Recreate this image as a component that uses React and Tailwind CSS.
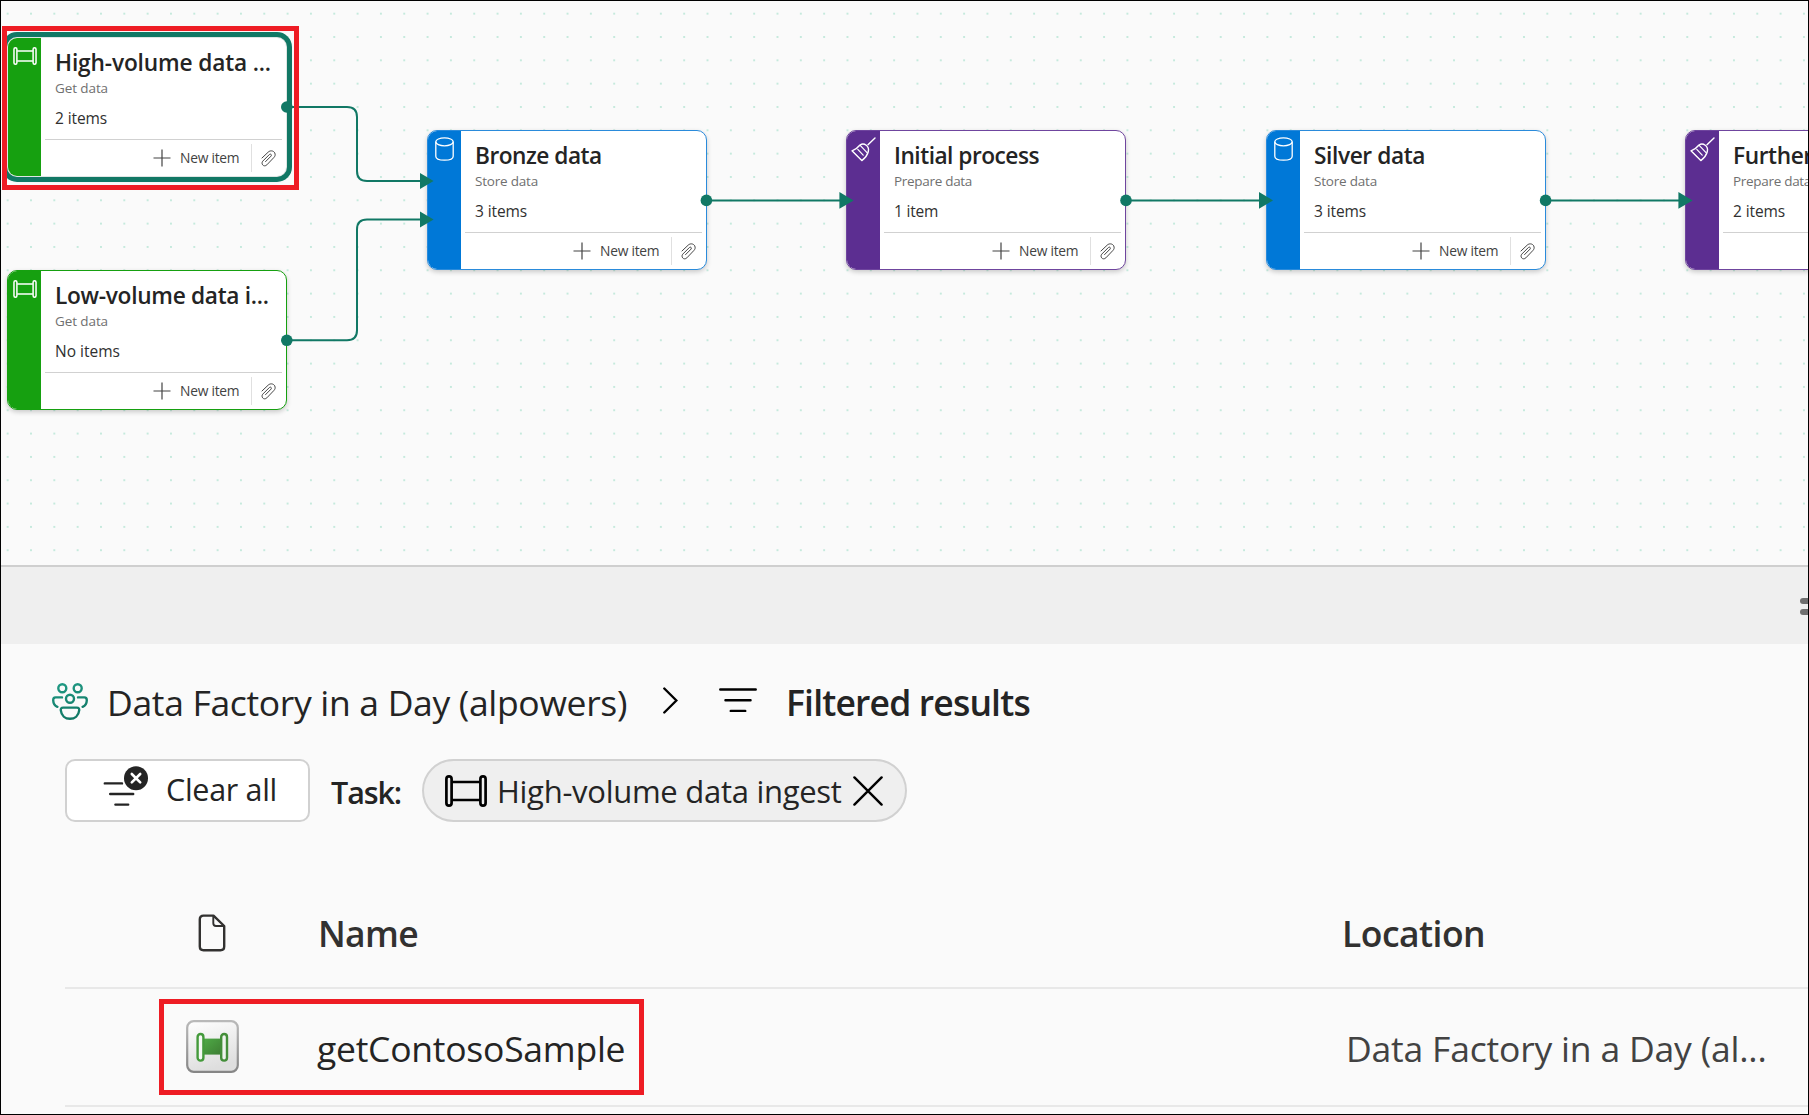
import React from "react";

function PipeIcon({ className }) {
  return (
    <svg viewBox="0 0 42 32" fill="none" stroke="currentColor" strokeWidth="2.7" className={className}>
      <rect x="1.4" y="1.4" width="5.2" height="29.2" rx="2.6" />
      <rect x="35.4" y="1.4" width="5.2" height="29.2" rx="2.6" />
      <path d="M7 7H35M7 25H35" />
    </svg>
  );
}

function CylinderIcon({ className }) {
  return (
    <svg viewBox="0 0 19 24" fill="none" stroke="currentColor" strokeWidth="1.3" className={className}>
      <ellipse cx="9.5" cy="4.8" rx="8.7" ry="4" />
      <path d="M.8 4.8V19.2C.8 21.6 4.6 23.2 9.5 23.2S18.2 21.6 18.2 19.2V4.8" />
    </svg>
  );
}

function BroomIcon({ className }) {
  return (
    <svg viewBox="0 0 25 25" fill="none" stroke="currentColor" strokeWidth="1.4" strokeLinecap="round" strokeLinejoin="round" className={className}>
      <path d="M24 .9 17 7.8" />
      <path d="M1 13.8 10.8 23.6C14.3 20.8 16.6 18 17.3 14.5 18.6 9.2 13.2 5.4 9 8 7 10.6 4.6 12.4 1 13.8Z" />
      <path d="M9.2 8.4 16 15.6M6.8 12.4 12.2 18.2" strokeWidth="1.2" />
    </svg>
  );
}

function ClipIcon({ className }) {
  return (
    <svg viewBox="0 0 46 51" fill="none" stroke="currentColor" strokeWidth="3" strokeLinecap="round" className={className}>
      <path d="M3 24 22 6C28 0 38 1 42 8 45 14 43 19 39 23L18 45C14 49 8 49 5 45 2 41 3 36 6 33L26 13C29 10 34 14 31 18L14 35" />
    </svg>
  );
}

function PlusIcon({ className }) {
  return (
    <svg viewBox="0 0 18 18" stroke="currentColor" strokeWidth="1.2" className={className}>
      <path d="M9 .5V17.5M.5 9H17.5" />
    </svg>
  );
}

function PeopleIcon({ className }) {
  return (
    <svg viewBox="0 0 36 37" fill="none" stroke="url(#people)" strokeWidth="2.4" strokeLinecap="round" className={className}>
      <defs>
        <linearGradient id="people" gradientUnits="userSpaceOnUse" x1="0" y1="0" x2="10" y2="37">
          <stop offset="0" stopColor="#219c86" />
          <stop offset="1" stopColor="#117865" />
        </linearGradient>
      </defs>
      <circle cx="10.3" cy="5.2" r="4" />
      <circle cx="25.7" cy="5.2" r="4" />
      <circle cx="18" cy="15.8" r="4" />
      <path d="M10 14.4H3.6C1.6 14.4 1.2 15.6 1.2 17.2 1.3 20.4 2.9 22.8 5.4 23.8M26 14.4H32.4C34.4 14.4 34.8 15.6 34.8 17.2 34.7 20.4 33.1 22.8 30.6 23.8" />
      <path d="M11.2 24.6H24.8C26.8 24.6 27.4 25.8 27.2 27.4 26.6 32.6 22.8 35.8 18 35.8S9.4 32.6 8.8 27.4C8.6 25.8 9.2 24.6 11.2 24.6Z" />
    </svg>
  );
}

function ClearFilterIcon({ className }) {
  return (
    <svg viewBox="0 0 46 41" fill="none" stroke="#242424" strokeWidth="2.4" strokeLinecap="round" className={className}>
      <path d="M1.8 17.4H19M7.2 28H30.2M12.4 38.6H25.2" />
      <circle cx="33" cy="12.2" r="12" fill="#242424" stroke="none" />
      <path d="M28.8 8 37.2 16.4M37.2 8 28.8 16.4" stroke="#fff" strokeWidth="2.6" />
    </svg>
  );
}

function PipelineTile({ className }) {
  return (
    <svg viewBox="0 0 53 53" className={className}>
      <defs>
        <linearGradient id="edge" x1="0" y1="0" x2="0" y2="1">
          <stop offset="0" stopColor="#b9b9b9" />
          <stop offset="1" stopColor="#868686" />
        </linearGradient>
        <linearGradient id="face" x1="0" y1="0" x2="0.3" y2="1">
          <stop offset="0" stopColor="#ffffff" />
          <stop offset="1" stopColor="#dedede" />
        </linearGradient>
        <linearGradient id="leaf" x1="0" y1="0" x2="1" y2="1">
          <stop offset="0" stopColor="#4fab46" />
          <stop offset="1" stopColor="#3d7d33" />
        </linearGradient>
      </defs>
      <rect x="1.2" y="1.2" width="50.6" height="50.6" rx="6.5" fill="url(#face)" stroke="url(#edge)" strokeWidth="2.2" />
      <path d="M17 18.6H36V34.6H17Z" fill="url(#leaf)" />
      <rect x="11.6" y="14" width="5.8" height="26.6" rx="2.9" fill="#f4f8f3" stroke="#449a3b" strokeWidth="2.4" />
      <rect x="35.2" y="14" width="5.8" height="26.6" rx="2.9" fill="#eef3ed" stroke="#438e39" strokeWidth="2.4" />
    </svg>
  );
}

const KINDS = {
  get: { label: "Get data", sub: "tracking-[-0.1px]", strip: "bg-[#16a010]", border: "border-[#16a010]" },
  store: { label: "Store data", sub: "tracking-[-0.2px]", strip: "bg-[#0078d7]", border: "border-[#2a8bdb]" },
  prepare: { label: "Prepare data", sub: "tracking-[-0.3px]", strip: "bg-[#5c2e91]", border: "border-[#6f459e]" },
};

function KindIcon({ kind }) {
  if (kind === "get") return <PipeIcon className="ml-[5px] mt-[9px] h-[18px] w-[24px] text-white" />;
  if (kind === "store") return <CylinderIcon className="ml-[7px] mt-[6px] h-[24px] w-[19px] text-white" />;
  return <BroomIcon className="ml-1 mt-[6px] h-[25px] w-[25px] text-white" />;
}

function TaskCard({ title, tracking, kind, count, countTracking, place, selected, footer = true }) {
  const k = KINDS[kind];
  return (
    <div
      className={`absolute flex h-[140px] w-[280px] overflow-hidden rounded-[10px] border bg-white shadow-[0_2px_5px_rgba(0,0,0,0.2)] ${selected ? "border-[#dfe6e4] outline-[5px] outline-[#117865]" : k.border} ${place}`}
    >
      <div className={`w-[33px] shrink-0 ${k.strip}`}>
        <KindIcon kind={kind} />
      </div>
      <div className="flex flex-1 flex-col pl-[4px] pr-[4px]">
        <div className="h-[101px] pl-[10px] whitespace-nowrap">
          <div className={`pt-[9px] text-[22.7px] leading-[32px] font-semibold text-[#242424] ${tracking}`}>{title}</div>
          <div className={`text-[13.5px] leading-[18px] text-[#707070] ${k.sub}`}>{k.label}</div>
          <div className={`mt-[11px] text-[15.5px] leading-[20px] text-[#303030] ${countTracking}`}>{count}</div>
        </div>
        <div className="flex h-[37px] items-center justify-end border-t border-[#d1d1d1] whitespace-nowrap">
          {footer && (
            <>
              <PlusIcon className="h-[18px] w-[18px] text-[#424242]" />
              <span className="ml-[9px] w-[71px] text-[13.8px] leading-[20px] tracking-[-0.25px] text-[#424242]">New item</span>
              <div className="h-[28px] w-px bg-[#e0e0e0]" />
              <ClipIcon className="ml-[9px] mr-[6px] h-[17px] w-[15px] text-[#424242]" />
            </>
          )}
        </div>
      </div>
    </div>
  );
}

function Connectors() {
  return (
    <svg className="absolute left-0 top-0" width="1809" height="565" viewBox="0 0 1809 565" fill="none">
      <g stroke="#117865" strokeWidth="2">
        <path d="M287 107H347Q357 107 357 117V171Q357 181 367 181H421" />
        <path d="M287 340.3H347Q357 340.3 357 330.3V229.6Q357 219.6 367 219.6H421" />
        <path d="M707 200.4H840M1126 200.4H1260M1546 200.4H1679" />
      </g>
      <g fill="#117865">
        <circle cx="286.8" cy="107" r="5.8" />
        <circle cx="286.8" cy="340.3" r="5.8" />
        <circle cx="706.4" cy="200.4" r="5.8" />
        <circle cx="1126" cy="200.4" r="5.8" />
        <circle cx="1545.6" cy="200.4" r="5.8" />
        <path d="M420 173 433.6 181 420 189ZM420 211.6 433.6 219.6 420 227.6ZM839.4 192 853.6 200.4 839.4 208.8ZM1259 192 1273 200.4 1259 208.8ZM1678.4 192 1692.6 200.4 1678.4 208.8Z" />
      </g>
    </svg>
  );
}

function TaskCanvas() {
  return (
    <div className="relative h-[565px] shrink-0 overflow-hidden bg-[radial-gradient(circle,#a5dfcb_0.5px,transparent_1px)] bg-[length:23.33px_23.33px] bg-[position:-4px_2px]">
      <TaskCard selected title="High-volume data ..." tracking="tracking-[-0.15px]" kind="get" count="2 items" countTracking="tracking-[-0.1px]" place="left-[7px] top-[37px]" />
      <TaskCard title="Low-volume data i..." tracking="tracking-[-0.3px]" kind="get" count="No items" countTracking="tracking-normal" place="left-[7px] top-[270px]" />
      <TaskCard title="Bronze data" tracking="tracking-[-0.5px]" kind="store" count="3 items" countTracking="tracking-[-0.1px]" place="left-[427px] top-[130px]" />
      <TaskCard title="Initial process" tracking="tracking-[-0.5px]" kind="prepare" count="1 item" countTracking="tracking-[-0.2px]" place="left-[846px] top-[130px]" />
      <TaskCard title="Silver data" tracking="tracking-[-0.4px]" kind="store" count="3 items" countTracking="tracking-[-0.1px]" place="left-[1266px] top-[130px]" />
      <TaskCard footer={false} title="Further" tracking="tracking-[-0.4px]" kind="prepare" count="2 items" countTracking="tracking-[-0.1px]" place="left-[1685px] top-[130px]" />
      <Connectors />
      <div className="absolute left-[2px] top-[26px] h-[164px] w-[297px] border-[5px] border-[#ee1c24]" />
    </div>
  );
}

export default function App() {
  return (
    <div className="relative flex h-[1115px] w-[1809px] flex-col overflow-hidden bg-[#fafafa] font-['Open_Sans','Noto_Sans',sans-serif] text-[#242424]">
      <TaskCanvas />

      <div className="flex h-[79px] shrink-0 flex-col items-end justify-center gap-[5px] border-t-2 border-[#cfcfcf] bg-[#efefef] pt-[2px]">
        <div className="h-[6px] w-[9px] rounded-l-full bg-[#6f6f6f]" />
        <div className="h-[6px] w-[9px] rounded-l-full bg-[#6f6f6f]" />
      </div>

      <div className="flex flex-col whitespace-nowrap pl-[65px]">
        <div className="-ml-[13px] mt-[28px] flex h-[60px] items-center">
          <PeopleIcon className="mb-[2px] h-[37px] w-[36px]" />
          <span className="ml-[19px] w-[557px] text-[35.5px] leading-[60px] tracking-[-0.33px]">Data Factory in a Day (alpowers)</span>
          <svg viewBox="0 0 15 27" fill="none" stroke="#000" strokeWidth="2.4" strokeLinecap="round" className="-ml-px mb-[3px] h-[27px] w-[15px]">
            <path d="M1.3 1.5 13.4 13.5 1.3 25.5" />
          </svg>
          <svg viewBox="0 0 38 24" fill="none" stroke="#000" strokeWidth="2.5" strokeLinecap="round" className="mb-[4px] ml-[41px] h-[24px] w-[38px]">
            <path d="M1.3 1.5H36.7M6.5 12.3H31.5M11.8 23H26.2" />
          </svg>
          <span className="ml-[29px] text-[35.5px] leading-[60px] font-semibold tracking-[-0.83px]">Filtered results</span>
        </div>

        <div className="mt-[27px] flex h-[63px] items-center">
          <button className="flex h-[63px] w-[245px] items-center rounded-[10px] border-2 border-[#d1d1d1] bg-white pl-[36px]">
            <ClearFilterIcon className="mb-[8px] h-[41px] w-[46px]" />
            <span className="ml-[17px] pb-[3px] text-[30.5px] leading-[50px] tracking-[-0.3px]">Clear all</span>
          </button>
          <span className="ml-[21px] w-[91px] pt-[3px] text-[30.5px] leading-[50px] font-semibold tracking-[-1.1px]">Task:</span>
          <div className="flex h-[63px] w-[485px] items-center rounded-full border-2 border-[#d1d1d1] bg-[#efefef] pl-[21px]">
            <PipeIcon className="h-[32px] w-[42px] text-black" />
            <span className="ml-[10px] w-[356px] pt-px text-[31px] leading-[50px] tracking-[-0.28px]">High-volume data ingest</span>
            <svg viewBox="0 0 30 30" stroke="#000" strokeWidth="2.4" strokeLinecap="round" className="h-[30px] w-[30px]">
              <path d="M1.4 1.4 28.6 28.6M28.6 1.4 1.4 28.6" />
            </svg>
          </div>
        </div>

        <div className="mt-[57px] grid h-[110px] grid-cols-[252px_1025px_1fr] items-center border-b-2 border-[#e8e8e8]">
          <svg viewBox="0 0 28 38" fill="none" stroke="#323130" strokeWidth="2.4" strokeLinejoin="round" className="ml-[133px] h-[38px] w-[28px]">
            <path d="M5.5 1.6H15.5L26.2 12V32.5Q26.2 36.2 22.5 36.2H5.5Q1.8 36.2 1.8 32.5V5.3Q1.8 1.6 5.5 1.6Z" />
            <path d="M15.3 2V9.3Q15.3 12 18 12H26" strokeWidth="1.9" />
          </svg>
          <span className="pl-px text-[35.5px] leading-[50px] font-semibold tracking-[-0.7px] text-[#323130]">Name</span>
          <span className="text-[35.5px] leading-[50px] font-semibold tracking-[-0.54px] text-[#323130]">Location</span>
        </div>

        <div className="relative grid h-[118px] grid-cols-[252px_1025px_1fr] items-center border-b-2 border-[#e8e8e8]">
          <PipelineTile className="mb-[2px] ml-[121px] h-[53px] w-[53px]" />
          <span className="pt-px text-[35.5px] leading-[50px] tracking-[-0.25px]">getContosoSample</span>
          <span className="pl-[4px] pt-px text-[35.5px] leading-[50px] tracking-[-0.2px] text-[#424242]">Data Factory in a Day (al...</span>
          <div className="absolute left-[94px] top-[10px] h-[96px] w-[485px] border-[5px] border-[#ee1c24]" />
        </div>
      </div>

      <div className="pointer-events-none absolute inset-0 border border-black" />
    </div>
  );
}
